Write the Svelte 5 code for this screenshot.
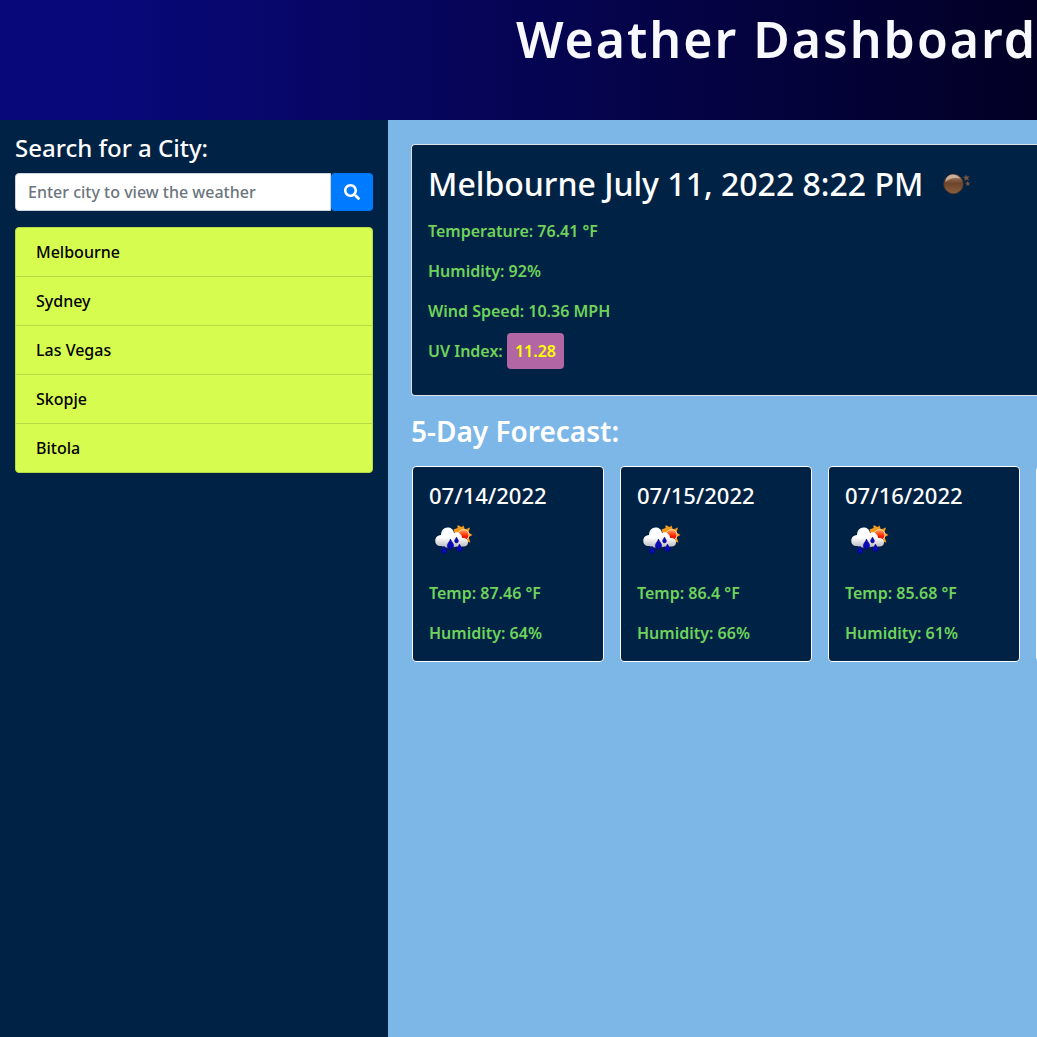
<script>
  const cities = ['Melbourne', 'Sydney', 'Las Vegas', 'Skopje', 'Bitola'];
  const forecast = [
    { date: '07/14/2022', temp: 87.46, humidity: 64 },
    { date: '07/15/2022', temp: 86.4, humidity: 66 },
    { date: '07/16/2022', temp: 85.68, humidity: 61 }
  ];
</script>

{#snippet rainIcon()}
  <svg class="weather" viewBox="0 0 50 50" role="img" aria-label="Rain with sun">
    <defs>
      <linearGradient id="cloud" x1="0" y1="0" x2="0" y2="1">
        <stop offset="0.5" stop-color="#ffffff" />
        <stop offset="1" stop-color="#b8b8c0" />
      </linearGradient>
      <linearGradient id="sun" x1="0" y1="0" x2="0" y2="1">
        <stop offset="0.1" stop-color="#ff9a50" />
        <stop offset="0.6" stop-color="#ff1a00" />
      </linearGradient>
    </defs>
    <path fill="#f79a1c" d="M34.400 10.500l1.600 4 5-2-1.500 5 4 2.500-4 2 2 5.500-5-1-3 3-3-4-5-8-1-3 4-1.500 0-3 4.200 2z" />
    <circle cx="34.500" cy="20" r="5.500" fill="url(#sun)" stroke="#ffdcae" stroke-width="1" />
    <path fill="url(#cloud)" d="M12.500 31C9 31.500 6 29 6.300 25.500C6.300 22 9 20.300 12 20C12 15.500 15 12.500 18.500 12.500C22 12.500 24.500 14.500 25 18C28 16 33 18.500 33 23C36 22.500 39.500 24.500 39 27.500C39 30.500 36.500 32 33.500 31.500C31 32.500 29 32 27.500 31.500C23 33 16 33 12.500 31Z" />
    <g fill="#0a0ab8" stroke="#05057a" stroke-width="0.500">
      <path d="M21.500 24c.8 2.500 3.200 4.500 3.200 6.400a3.200 3.200 0 0 1-6.400 0c0-1.900 2.400-3.900 3.200-6.400z" />
      <path d="M27.500 22c.5 1.600 1.900 2.600 1.900 4a1.900 1.900 0 0 1-3.800 0c0-1.400 1.400-2.400 1.900-4z" />
      <path d="M15 31c.5 2 2.700 3.200 2.700 4.800a2.700 2.700 0 0 1-5.400 0c0-1.600 2.200-2.800 2.700-4.800z" />
      <path d="M30.500 29c.5 2 2.700 3.200 2.700 4.800a2.700 2.700 0 0 1-5.400 0c0-1.600 2.200-2.800 2.700-4.800z" />
    </g>
  </svg>
{/snippet}

<div class="page">
  <header><h1>Weather Dashboard</h1></header>
  <div class="columns">
    <aside>
      <h2><label for="city">Search for a City:</label></h2>
      <form onsubmit={(e) => e.preventDefault()}>
        <input id="city" type="text" placeholder="Enter city to view the weather" />
        <button type="submit" aria-label="Search">
          <svg viewBox="0 0 512 512" aria-hidden="true">
            <path fill="currentColor" d="M505 442.700L405.300 343c-4.500-4.500-10.600-7-17-7H372c27.600-35.300 44-79.700 44-128C416 93.100 322.900 0 208 0S0 93.100 0 208s93.100 208 208 208c48.300 0 92.700-16.400 128-44v16.300c0 6.400 2.500 12.500 7 17l99.700 99.700c9.400 9.400 24.600 9.400 33.900 0l28.300-28.300c9.400-9.400 9.400-24.600.1-34zM208 336c-70.700 0-128-57.200-128-128 0-70.700 57.200-128 128-128 70.700 0 128 57.200 128 128 0 70.700-57.200 128-128 128z" />
          </svg>
        </button>
      </form>
      <ul class="cities">
        {#each cities as city}
          <li>{city}</li>
        {/each}
      </ul>
    </aside>

    <main>
      <section class="current">
        <div class="heading">
          <h2>Melbourne July 11, 2022 8:22 PM</h2>
          <svg class="weather" viewBox="0 0 50 50" role="img" aria-label="Clear night">
            <defs>
              <linearGradient id="moon" x1="0" y1="0" x2="0" y2="1">
                <stop offset="0" stop-color="#ad8a70" />
                <stop offset="0.45" stop-color="#6e452a" />
                <stop offset="1" stop-color="#8a5f40" />
              </linearGradient>
            </defs>
            <circle cx="22.500" cy="25" r="9.700" fill="url(#moon)" stroke="#59392a" stroke-width="0.8" />
            <path d="M14.500 23C15 14 25 13.500 29 19.500C24 18 18 19.500 14.500 23Z" fill="#e0c8b4" opacity="0.7" />
            <path fill="#79523b" d="M35 15.500l1 2 2.500-.3-1.500 2 1 2.300-2.400-1-2 1.500.2-2.500-2-1.500 2.500-.4zM36.500 22l.8 1.600 1.900-.2-1.200 1.500.8 1.800-1.900-.8-1.500 1.200.1-2-1.500-1.100 1.900-.4z" />
          </svg>
        </div>
        <p>Temperature: 76.41 °F</p>
        <p>Humidity: 92%</p>
        <p>Wind Speed: 10.36 MPH</p>
        <p>UV Index: <span class="uv">11.28</span></p>
      </section>

      <h3>5-Day Forecast:</h3>
      <div class="forecast">
        {#each forecast as day}
          <article>
            <h4>{day.date}</h4>
            {@render rainIcon()}
            <p>Temp: {day.temp} °F</p>
            <p>Humidity: {day.humidity}%</p>
          </article>
        {/each}
        <article aria-hidden="true"></article>
      </div>
    </main>
  </div>
</div>

<style>
  :global(body) {
    margin: 0;
    background: #7cb7e8;
  }

  .page {
    display: flex;
    flex-direction: column;
    min-height: 100vh;
    overflow: hidden;
    font: 500 16px/24px 'Noto Sans', 'Open Sans', sans-serif;
    color: #fff;
  }

  .page * {
    box-sizing: border-box;
  }

  h1, h2, h3, h4, p, ul {
    margin: 0;
    padding: 0;
    font-weight: 500;
  }

  header {
    display: flex;
    justify-content: flex-end;
    height: 120px;
    padding-top: 8px;
    background: linear-gradient(to right, #08087a 10%, #020024 100%);
  }

  h1 {
    font-size: 50px;
    line-height: 62px;
    letter-spacing: 2px;
    font-weight: 600;
    white-space: nowrap;
    color: #f8f8ff;
  }

  .columns {
    flex: 1;
    display: grid;
    grid-template-columns: 388px minmax(0, 1fr);
  }

  aside {
    padding: 13px 15px;
    background: #002244;
  }

  aside h2 {
    font-size: 24px;
    line-height: 30px;
    margin-bottom: 10px;
  }

  form {
    display: flex;
    height: 38px;
    margin-bottom: 16px;
  }

  input {
    flex: 1;
    min-width: 0;
    padding: 6px 12px;
    border: 1px solid #ced4da;
    border-radius: 4px 0 0 4px;
    background: #fff;
    font: inherit;
    color: #495057;
  }

  input::placeholder {
    color: #6c757d;
    opacity: 1;
  }

  button {
    display: grid;
    place-items: center;
    width: 42px;
    padding: 0;
    border: 0;
    border-radius: 4px;
    background: #007bff;
    color: #fff;
  }

  button svg {
    width: 16px;
    height: 16px;
  }

  .cities {
    list-style: none;
    border: 1px solid #b9da44;
    border-radius: 4px;
    overflow: hidden;
    background: #d7fc50;
    color: #000;
  }

  .cities li {
    padding: 12px 20px;
  }

  .cities li + li {
    border-top: 1px solid #b9da44;
  }

  main {
    padding: 24px 0 24px 23px;
    background: #7cb7e8;
  }

  .current {
    padding: 14px 16px 0;
    border: 1px solid #dfe3e6;
    border-right: 0;
    border-radius: 4px 0 0 4px;
    background: #002244;
  }

  .heading {
    display: flex;
    align-items: center;
    gap: 8px;
    height: 50px;
    margin-bottom: 10px;
    white-space: nowrap;
  }

  .heading h2 {
    font-size: 32px;
    line-height: 40px;
  }

  .weather {
    display: block;
    flex: none;
    width: 50px;
    height: 50px;
  }

  p {
    margin-bottom: 16px;
    font-weight: 600;
    color: #6fd35b;
  }

  .current p:last-child {
    margin-bottom: 32px;
  }

  .uv {
    padding: 7px 8px;
    border-radius: 4px;
    background: #b266a3;
    color: #ff0;
  }

  h3 {
    margin: 18px 0;
    font-size: 28px;
    line-height: 34px;
    font-weight: 600;
  }

  .forecast {
    display: flex;
    gap: 16px;
    margin-left: 1px;
    overflow: hidden;
  }

  article {
    flex: none;
    width: 192px;
    padding: 16px 16px 0;
    border: 1px solid #fff;
    border-radius: 4px;
    background: #002244;
  }

  h4 {
    margin-bottom: 8px;
    font-size: 22px;
    line-height: 24px;
  }

  article .weather {
    margin-bottom: 16px;
  }
</style>
